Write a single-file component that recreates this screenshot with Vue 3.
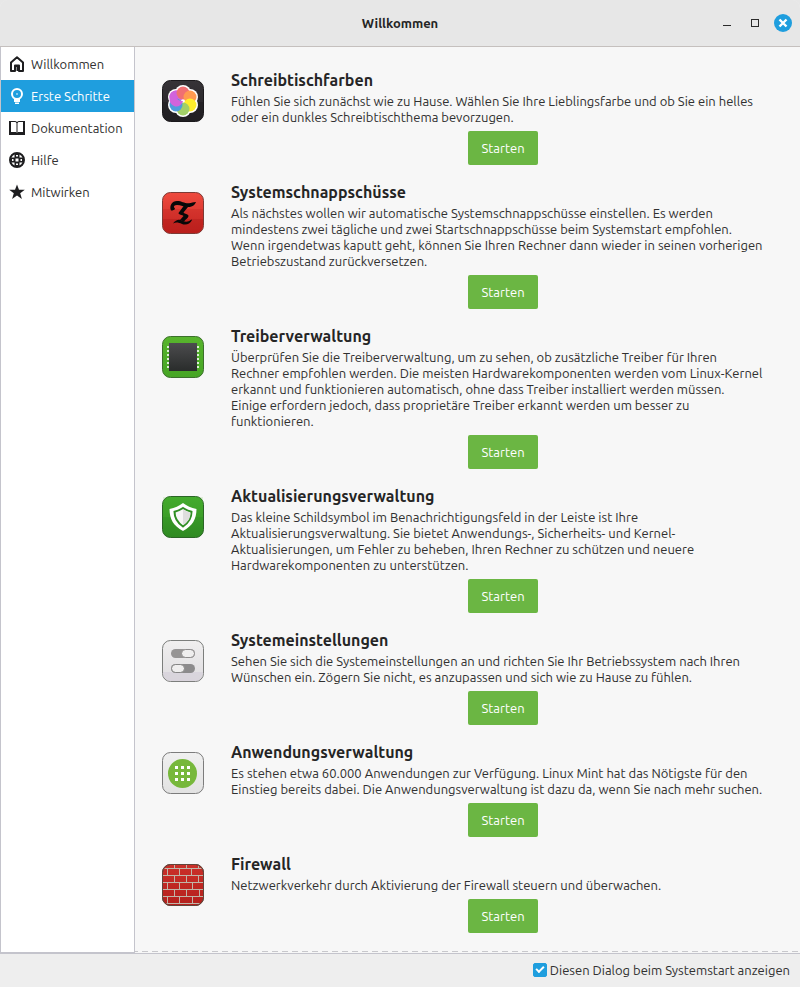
<template>
  <div class="window">
    <header class="titlebar">
      <h1>Willkommen</h1>
      <div class="controls">
        <button type="button" aria-label="Minimieren">
          <svg width="18" height="18" viewBox="0 0 18 18"><path d="M5 11h8v1H5z" fill="#2b2b2b" /></svg>
        </button>
        <button type="button" aria-label="Maximieren">
          <svg width="18" height="18" viewBox="0 0 18 18"><rect x="5.5" y="5.5" width="7" height="7" fill="none" stroke="#2b2b2b" /></svg>
        </button>
        <button type="button" aria-label="Schließen">
          <svg width="18" height="18" viewBox="0 0 18 18">
            <circle cx="9" cy="9" r="9" fill="#1f9ede" />
            <path d="M5.500 5.500l7 7M12.500 5.500l-7 7" stroke="#fff" stroke-width="2.400" />
          </svg>
        </button>
      </div>
    </header>

    <div class="body">
      <nav class="sidebar">
        <button
          v-for="page in pages"
          :key="page.id"
          type="button"
          class="page"
          :class="{ active: page.id === current }"
          @click="current = page.id"
        >
          <svg v-if="page.id === 'home'" width="16" height="16" viewBox="0 0 16 16">
            <path d="M2 15V6.6L8 1.3l6 5.3V15h-4V9.5H6V15z" fill="none" stroke="currentColor" stroke-width="2" stroke-linejoin="round" />
            <path d="M6 9h4v6H6z" fill="currentColor" />
            <path d="M7 11h1v4H7z" fill="#fff" opacity=".5" />
          </svg>
          <svg v-else-if="page.id === 'steps'" width="16" height="16" viewBox="0 0 16 16">
            <circle cx="8" cy="6" r="5" fill="none" stroke="currentColor" stroke-width="2" />
            <circle cx="8" cy="6" r="1" fill="currentColor" opacity=".6" />
            <path d="M5 10h6v4H5zM6 14.500h4V16H6z" fill="currentColor" />
          </svg>
          <svg v-else-if="page.id === 'docs'" width="16" height="16" viewBox="0 0 16 16">
            <path d="M0 1h2v11h5l1 1 1-1h5V1h2v14H0z" fill="currentColor" />
            <path d="M2 1.500h4q2 0 2 1.500 0-1.500 2-1.500h4M8 2v11" fill="none" stroke="currentColor" />
          </svg>
          <svg v-else-if="page.id === 'help'" width="16" height="16" viewBox="0 0 16 16">
            <circle cx="8" cy="8" r="7" fill="none" stroke="currentColor" stroke-width="2" />
            <path d="M5.500 1h5v4.500H15v5h-4.500V15h-5v-4.500H1v-5h4.500z" fill="currentColor" />
            <path d="M6.500 6.500h3v3h-3zM7 3h2v1.500H7zM7 11.500h2V13H7zM3 7h1.500v2H3zM11.500 7H13v2h-1.500z" fill="#fff" />
          </svg>
          <svg v-else width="16" height="16" viewBox="0 0 16 16">
            <path d="M8 .4l2 5.400h5.800l-4.600 3.500 1.700 5.800L8 11.600l-4.900 3.500 1.700-5.800L.2 5.800H6z" fill="currentColor" />
          </svg>
          <span>{{ page.label }}</span>
        </button>
      </nav>

      <main class="content">
        <section v-for="step in steps" :key="step.id" class="step">
          <svg class="icon" width="42" height="42" viewBox="0 0 42 42">
            <defs>
              <linearGradient :id="'bg-' + step.id" x1="0" y1="0" x2="0" y2="1">
                <stop offset="0" :stop-color="step.from" />
                <stop offset="1" :stop-color="step.to" />
              </linearGradient>
            </defs>
            <rect x=".5" y=".5" width="41" height="41" rx="8" :fill="`url(#bg-${step.id})`" :stroke="step.edge" />

            <g v-if="step.id === 'colors'">
              <path d="M1 22h40v11a8 8 0 0 1-8 8H9a8 8 0 0 1-8-8z" fill="#201e21" opacity=".6" />
              <g fill="#fff">
                <circle v-for="p in petals" :key="p.color" :cx="p.x" :cy="p.y" r="8" />
              </g>
              <circle v-for="p in petals" :key="p.color" :cx="p.x" :cy="p.y" r="6.500" :fill="p.color" />
              <path d="M21 21a6.500 6.500 0 0 1-13.300-2.500A6.500 6.500 0 0 1 15 10.600 6.500 6.500 0 0 0 21 21z" fill="#d163dc" />
            </g>

            <g v-else-if="step.id === 'snapshots'">
              <path d="M1 17h40v10H1z" fill="#a81414" opacity=".2" />
              <path d="M1 27h40v6a8 8 0 0 1-8 8H9a8 8 0 0 1-8-8z" fill="#a01010" opacity=".4" />
              <path d="M9 18.500C7 14 10 9 15 9c5 0 7 2.500 12 2.300 2.500-.1 4-1.300 7-1.300-1 3-4 5-8 5-4.500 0-7-2-11-2-2.500 0-3.500 1-3 2.500 1.500.5 1.500 3-3 3z" fill="#080808" />
              <path d="M22 13.500l4 1.500-4.500 5.500c1 1.500 5 1.500 5 3.500 0 1.500-2.500 3-4.500 5.500l-4-1.500 3.500-4c-1-1.500-5-1-5-3z" fill="#080808" />
              <path d="M11 31.500c3-4 6-4.500 9.500-2.800 3.500 1.700 5.500 1.300 9-1.200l.5.500c-2 4-6 5.500-10 4-3.500-1.500-6-2-9-.5z" fill="#080808" />
            </g>

            <g v-else-if="step.id === 'drivers'">
              <linearGradient id="bg-chip" x1="0" y1="0" x2="0" y2="1">
                <stop offset="0" stop-color="#4c4c4e" />
                <stop offset="1" stop-color="#292c2b" />
              </linearGradient>
              <rect x="7" y="7" width="28" height="28" fill="url(#bg-chip)" />
              <path d="M6 10v22M36 10v22" stroke="#dcefd6" stroke-width="2" stroke-dasharray="2 2" />
            </g>

            <g v-else-if="step.id === 'updates'">
              <path d="M1 1h40v20H1z" fill="#5cc437" opacity=".15" />
              <path d="M21 7c4 3 8 5 13.500 6 0 10-4 17-13.500 22C11.500 30 7.500 23 7.500 13c5.500-1 9.500-3 13.500-6z" fill="#fff" />
              <path d="M21 12c3 2 5.500 3 8.500 3.800 0 6.500-3 11-8.500 14.700-5.500-3.700-8.500-8.200-8.500-14.700 3-.8 5.500-1.800 8.500-3.800z" fill="#f6f6f6" stroke="#2f8f24" stroke-width="2" />
              <path d="M21 13.500c2.500 1.500 4.500 2.500 7.500 3.200 0 5.500-2.500 9.300-7.500 12.600z" fill="#dedede" />
            </g>

            <g v-else-if="step.id === 'settings'">
              <path d="M1 32h40v1a8 8 0 0 1-8 8H9a8 8 0 0 1-8-8z" fill="#d6d0da" opacity=".7" />
              <rect x="9" y="9" width="24" height="9" rx="4.500" fill="#969494" />
              <rect x="19.500" y="9.500" width="13" height="8" rx="4" fill="#efeeee" stroke="#8e8c8c" />
              <rect x="9" y="24" width="24" height="9" rx="4.500" fill="#8c8b8c" />
              <rect x="9.500" y="24.500" width="13" height="8" rx="4" fill="#efeeee" stroke="#858585" />
            </g>

            <g v-else-if="step.id === 'software'">
              <circle cx="20.500" cy="21.500" r="14.500" fill="#77b83b" />
              <path d="M13 15.500h15M13 21.500h15M13 27.500h15" stroke="#fff" stroke-width="3" stroke-dasharray="3 3" />
            </g>

            <g v-else>
              <clipPath id="wall"><rect x="1" y="1" width="40" height="40" rx="8" /></clipPath>
              <g clip-path="url(#wall)" fill="none" stroke="#c0b5a8" stroke-width="1">
                <path d="M1 4.500h40M1 11.500h40M1 18.500h40M1 25.500h40M1 32.500h40M1 39.500h40" />
                <path d="M12.500 0v4.500M24.500 0v4.500M36.500 0v4.500M5.500 4.500v7M17.500 4.500v7M29.500 4.500v7M12.500 11.500v7M24.500 11.500v7M36.500 11.500v7M5.500 18.500v7M17.500 18.500v7M30.500 18.500v7M12.500 25.500v7M24.500 25.500v7M37.500 25.500v7M5.500 32.500v7M17.500 32.500v7M30.500 32.500v7" />
              </g>
              <rect x=".5" y=".5" width="41" height="41" rx="8" fill="none" :stroke="step.edge" />
            </g>
          </svg>
          <div class="info">
            <h2>{{ step.title }}</h2>
            <p>{{ step.text }}</p>
            <button type="button" class="start">Starten</button>
          </div>
        </section>
      </main>
    </div>

    <footer class="footer">
      <label>
        <input v-model="showAtStartup" type="checkbox" />
        <span>Diesen Dialog beim Systemstart anzeigen</span>
      </label>
    </footer>
  </div>
</template>

<script setup>
import { ref } from "vue";

const current = ref("steps")
const showAtStartup = ref(true)

const pages = [
  { id: "home", label: "Willkommen" },
  { id: "steps", label: "Erste Schritte" },
  { id: "docs", label: "Dokumentation" },
  { id: "help", label: "Hilfe" },
  { id: "contribute", label: "Mitwirken" },
]

// painted in order, each petal over the one before
const petals = [
  { x: 14, y: 17, color: "#d163dc" },
  { x: 21, y: 13, color: "#f06f72" },
  { x: 28, y: 17, color: "#ff9a50" },
  { x: 28, y: 25, color: "#ffee2c" },
  { x: 21, y: 29, color: "#a2d068" },
  { x: 14, y: 25, color: "#4f9ddc" },
]

const steps = [
  {
    id: "colors",
    title: "Schreibtischfarben",
    from: "#363337", to: "#242225", edge: "#1b191c",
    text: "Fühlen Sie sich zunächst wie zu Hause. Wählen Sie Ihre Lieblingsfarbe und ob Sie ein helles\noder ein dunkles Schreibtischthema bevorzugen.",
  },
  {
    id: "snapshots",
    title: "Systemschnappschüsse",
    from: "#ee4a3e", to: "#cc2925", edge: "#7d3a35",
    text: "Als nächstes wollen wir automatische Systemschnappschüsse einstellen. Es werden\nmindestens zwei tägliche und zwei Startschnappschüsse beim Systemstart empfohlen.\nWenn irgendetwas kaputt geht, können Sie Ihren Rechner dann wieder in seinen vorherigen\nBetriebszustand zurückversetzen.",
  },
  {
    id: "drivers",
    title: "Treiberverwaltung",
    from: "#58b52d", to: "#46a525", edge: "#3c702c",
    text: "Überprüfen Sie die Treiberverwaltung, um zu sehen, ob zusätzliche Treiber für Ihren\nRechner empfohlen werden. Die meisten Hardwarekomponenten werden vom Linux-Kernel\nerkannt und funktionieren automatisch, ohne dass Treiber installiert werden müssen.\nEinige erfordern jedoch, dass proprietäre Treiber erkannt werden um besser zu\nfunktionieren.",
  },
  {
    id: "updates",
    title: "Aktualisierungsverwaltung",
    from: "#40a82c", to: "#2f8a22", edge: "#2b6526",
    text: "Das kleine Schildsymbol im Benachrichtigungsfeld in der Leiste ist Ihre\nAktualisierungsverwaltung. Sie bietet Anwendungs-, Sicherheits- und Kernel-\nAktualisierungen, um Fehler zu beheben, Ihren Rechner zu schützen und neuere\nHardwarekomponenten zu unterstützen.",
  },
  {
    id: "settings",
    title: "Systemeinstellungen",
    from: "#f0efef", to: "#dfdde0", edge: "#7c7e7c",
    text: "Sehen Sie sich die Systemeinstellungen an und richten Sie Ihr Betriebssystem nach Ihren\nWünschen ein. Zögern Sie nicht, es anzupassen und sich wie zu Hause zu fühlen.",
  },
  {
    id: "software",
    title: "Anwendungsverwaltung",
    from: "#f0f0f0", to: "#e2e2e2", edge: "#7c7c7c",
    text: "Es stehen etwa 60.000 Anwendungen zur Verfügung. Linux Mint hat das Nötigste für den\nEinstieg bereits dabei. Die Anwendungsverwaltung ist dazu da, wenn Sie nach mehr suchen.",
  },
  {
    id: "firewall",
    title: "Firewall",
    from: "#cb3029", to: "#b4201d", edge: "#63443a",
    text: "Netzwerkverkehr durch Aktivierung der Firewall steuern und überwachen.",
  },
]
</script>

<style>
body {
  margin: 0;
  background: #e7e7e7;
}
</style>

<style scoped>
.window {
  display: flex;
  flex-direction: column;
  min-height: 100vh;
  box-sizing: border-box;
  overflow: hidden;
  border-radius: 8px 8px 0 0;
  font-family: Ubuntu, "Noto Sans", sans-serif;
  font-size: 13px;
  line-height: 16px;
  color: #303030;
  background: #eeeeee;
}

button {
  font: inherit;
  border: 0;
  cursor: pointer;
}

.titlebar {
  display: grid;
  grid-template-columns: 1fr auto 1fr;
  align-items: center;
  height: 46px;
  padding: 0 8px;
  border-bottom: 1px solid #c5c0be;
  background: #e7e7e7;
}

.titlebar h1 {
  grid-column: 2;
  margin: 0;
  font-size: 13px;
  font-weight: 600;
  color: #252525;
}

.controls {
  display: flex;
  justify-content: flex-end;
  gap: 10px;
}

.controls button {
  display: flex;
  padding: 0;
  background: none;
}

.body {
  display: flex;
  flex: 1;
  border-bottom: 1px solid #c4c4cc;
}

.sidebar {
  flex: none;
  width: 133px;
  padding-top: 1px;
  border: 1px solid #c4c4cc;
  border-top: 0;
  background: #fff;
}

.page {
  display: flex;
  align-items: center;
  gap: 6px;
  width: 100%;
  height: 32px;
  padding: 0 8px;
  text-align: left;
  white-space: nowrap;
  color: #303030;
  background: none;
}

.page svg {
  flex: none;
  color: #1e1e20;
}

.page.active,
.page.active svg {
  color: #fff;
}

.page.active {
  background: #1f9ede;
}

.content {
  display: flex;
  flex: 1;
  flex-direction: column;
  gap: 16px;
  min-width: 0;
  padding: 22px 25px 18px 27px;
  background: repeating-linear-gradient(90deg, #c8c8cc 0 3px, transparent 3px 7px, #c8c8cc 7px 10px) left bottom 1px / 100% 1px no-repeat #f7f7f7;
}

.step {
  display: flex;
  gap: 27px;
}

.icon {
  flex: none;
  margin-top: 11px;
}

.info {
  display: flex;
  flex: 1;
  flex-direction: column;
  min-width: 0;
}

.info h2 {
  margin: 0 0 2px;
  font-size: 16px;
  font-weight: 600;
  line-height: 22px;
  color: #252525;
}

.info p {
  margin: 0 0 6px;
  white-space: pre-line;
}

.start {
  align-self: center;
  width: 70px;
  height: 34px;
  padding: 0;
  border-radius: 2px;
  color: #fff;
  background: #6bb643;
}

.footer {
  display: flex;
  justify-content: flex-end;
  align-items: center;
  height: 31px;
  padding: 0 10px 2px;
}

.footer label {
  display: flex;
  align-items: center;
  gap: 3px;
}

.footer input {
  appearance: none;
  width: 14px;
  height: 14px;
  margin: 0;
  border: 1px solid #1f9ede;
  border-radius: 2px;
  background: #fff;
}

.footer input:checked {
  display: grid;
  place-items: center;
  background: #1f9ede;
}

.footer input:checked::after {
  content: "";
  width: 6px;
  height: 3px;
  margin-bottom: 2px;
  border: solid #fff;
  border-width: 0 0 2px 2px;
  transform: rotate(-45deg);
}
</style>
